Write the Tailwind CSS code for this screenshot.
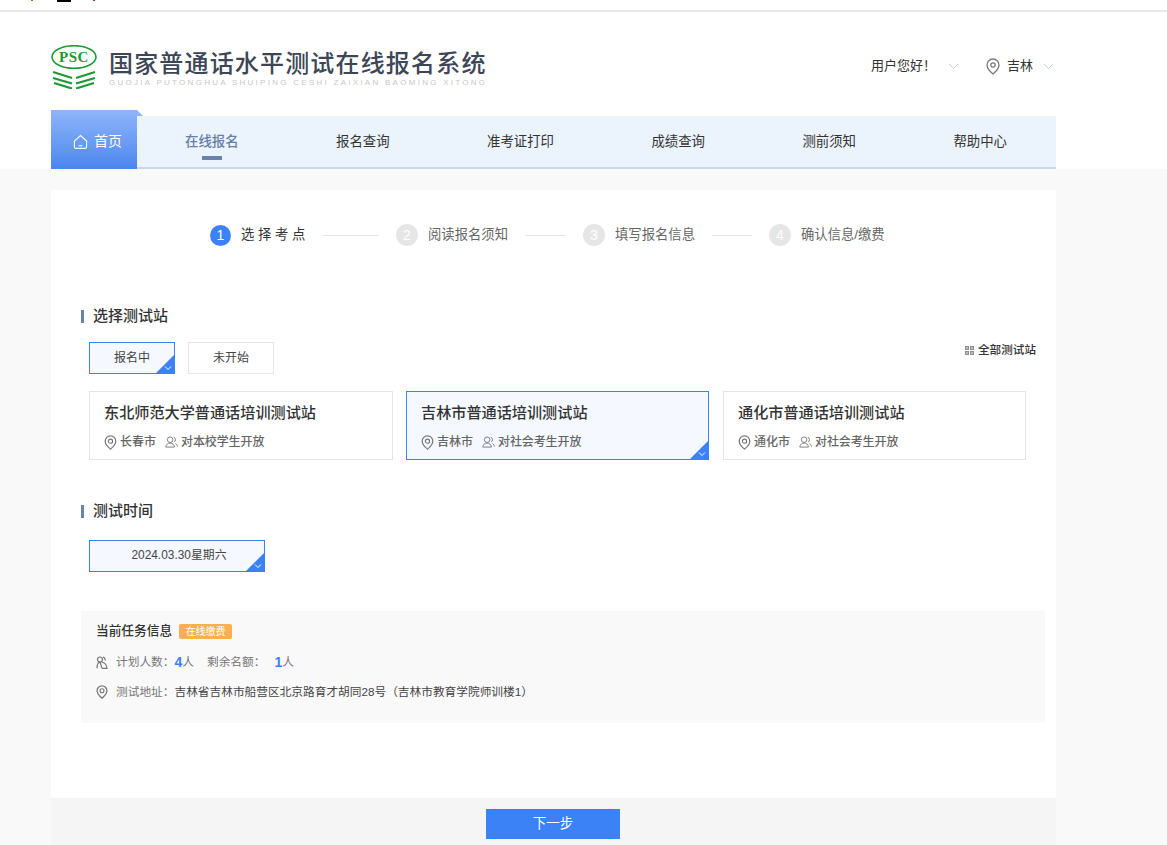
<!DOCTYPE html>
<html lang="zh-CN">
<head>
<meta charset="utf-8">
<title>国家普通话水平测试在线报名系统</title>
<script src="https://cdn.jsdelivr.net/npm/@tailwindcss/browser@4"></script>
</head>
<body class="bg-[#f9f9f9] font-['Liberation_Sans','Noto_Sans_CJK_SC',sans-serif] text-[#333]">
<div class="h-[845px] overflow-hidden flex flex-col">
  <!-- top sliver -->
  <div class="bg-white h-[12px] shrink-0 border-b-2 border-[#e8e8e8] flex items-start">
    <span class="ml-[31px] w-[2px] h-[1px] bg-[#a86a2a]"></span>
    <span class="ml-[24px] w-[14px] h-[2px] bg-black"></span>
    <span class="ml-[22px] w-[2px] h-[1px] bg-[#8a2a5a]"></span>
  </div>

  <!-- header -->
  <header class="bg-white h-[157px] shrink-0">
    <div class="w-[1005px] ml-[51px]">
      <div class="h-[98px] flex items-start">
        <div class="mt-[33px] flex items-start">
          <svg width="46" height="44" viewBox="0 0 46 44" class="shrink-0">
            <ellipse cx="23" cy="12" rx="22" ry="11.300" fill="none" stroke="#1a9a35" stroke-width="1.600"/>
            <text x="23" y="17.300" text-anchor="middle" font-family="Liberation Serif" font-weight="700" font-size="15" letter-spacing="0.500" fill="#1a9a35">PSC</text>
            <g fill="none" stroke="#1a9a35" stroke-width="2.200">
              <path d="M2 27 L21 33 M2 33 L21 38.500 M3 38 L21 43.500"/>
              <path d="M44 27 L25 33 M44 33 L25 38.500 M43 38 L25 43.500"/>
            </g>
          </svg>
          <div class="ml-[12px] mt-[4px]">
            <div class="text-[24px] leading-[29px] tracking-[1.170px] font-medium text-[#3d4656] whitespace-nowrap">国家普通话水平测试在线报名系统</div>
            <div class="text-[8px] leading-[9px] tracking-[2.270px] text-[#c8c8c8] whitespace-nowrap font-['Liberation_Sans',sans-serif]">GUOJIA PUTONGHUA SHUIPING CESHI ZAIXIAN BAOMING XITONG</div>
          </div>
        </div>
        <div class="ml-auto mt-[44px] mr-[2px] flex items-center h-[20px] text-[13px] text-[#333]">
          <span>用户您好！</span>
          <svg width="11" height="7" viewBox="0 0 11 7" class="ml-[12px]"><path d="M1 1l4.500 4.500L10 1" fill="none" stroke="#c5d0e0" stroke-width="1"/></svg>
          <svg width="14" height="17" viewBox="0 0 14 17" class="ml-[27px]"><path d="M7 1a6 6 0 0 0-6 6c0 4 6 9 6 9s6-5 6-9a6 6 0 0 0-6-6z" fill="none" stroke="#777" stroke-width="1.300"/><circle cx="7" cy="7" r="2.200" fill="none" stroke="#777" stroke-width="1.200"/></svg>
          <span class="ml-[7px]">吉林</span>
          <svg width="11" height="7" viewBox="0 0 11 7" class="ml-[10px]"><path d="M1 1l4.500 4.500L10 1" fill="none" stroke="#c5d0e0" stroke-width="1"/></svg>
        </div>
      </div>
      <nav class="h-[59px] flex items-end relative">
        <a class="relative w-[86px] h-[59px] shrink-0 bg-gradient-to-b from-[#8fb5fb] to-[#4a86ee] text-white flex items-center pl-[22px] pt-[4px] gap-[6px] text-[14px]">
          <svg width="15" height="16" viewBox="0 0 16 16"><path d="M1.500 7 8 1.200 14.500 7v6.300a1.500 1.500 0 0 1-1.500 1.500H3a1.500 1.500 0 0 1-1.500-1.500z" fill="none" stroke="#fff" stroke-width="1.200"/><path d="M6 12h4" stroke="#fff" stroke-width="1.200"/></svg>
          <span>首页</span>
          <span class="absolute left-full top-0 w-[6px] h-[6px] bg-[#8fb5fb] [clip-path:polygon(0_0,100%_100%,0_100%)]"></span>
        </a>
        <div class="flex-1 h-[53px] bg-[#ebf3fc] border-b-2 border-[#c9d8e8] flex justify-between pl-[48px] pr-[49px] text-[13.400px] leading-[51px] text-[#333] whitespace-nowrap">
          <a class="relative text-[#667fa6] font-medium">在线报名<span class="absolute left-[17px] bottom-[7px] w-[20px] h-[4px] bg-[#6b82aa]"></span></a>
          <a>报名查询</a>
          <a>准考证打印</a>
          <a>成绩查询</a>
          <a>测前须知</a>
          <a>帮助中心</a>
        </div>
      </nav>
    </div>
  </header>

  <!-- main -->
  <main class="w-[1005px] ml-[51px] mt-[21px] flex-1 flex flex-col min-h-0">
    <div class="h-[608px] shrink-0 bg-white px-[30px]">
      <!-- steps -->
      <div class="h-[90px] pl-[129px] flex items-center text-[13.330px] text-[#666] whitespace-nowrap">
        <span class="w-[21px] h-[21px] rounded-full bg-[#3b82f6] text-white text-[14px] flex items-center justify-center">1</span>
        <span class="ml-[10px] w-[66px] tracking-[3.700px] text-[#333]">选择考点</span>
        <span class="ml-[16px] w-[56px] h-px bg-[#e3e3e3]"></span>
        <span class="ml-[17px] w-[22px] h-[22px] rounded-full bg-[#e6e6e6] text-white text-[14px] flex items-center justify-center">2</span>
        <span class="ml-[10px] w-[80px]">阅读报名须知</span>
        <span class="ml-[17px] w-[41px] h-px bg-[#e3e3e3]"></span>
        <span class="ml-[17px] w-[22px] h-[22px] rounded-full bg-[#e6e6e6] text-white text-[14px] flex items-center justify-center">3</span>
        <span class="ml-[10px] w-[80px]">填写报名信息</span>
        <span class="ml-[17px] w-[40px] h-px bg-[#e3e3e3]"></span>
        <span class="ml-[17px] w-[22px] h-[22px] rounded-full bg-[#e6e6e6] text-white text-[14px] flex items-center justify-center">4</span>
        <span class="ml-[10px]">确认信息/缴费</span>
      </div>

      <!-- 选择测试站 -->
      <div class="mt-[28px] h-[16px] flex items-center">
        <span class="w-[3px] h-[13px] bg-[#6b82aa]"></span>
        <h2 class="ml-[9px] text-[15px] font-medium text-[#333]">选择测试站</h2>
      </div>
      <div class="mt-[18px] pl-[8px] h-[32px] flex items-start">
        <button class="relative w-[86px] h-[32px] border border-[#3b82f6] bg-[#f5f8ff] text-[12px] text-[#444] overflow-hidden">报名中
          <span class="absolute right-0 bottom-0 w-[18px] h-[18px] bg-[#3b82f6] [clip-path:polygon(100%_0,100%_100%,0_100%)]"></span>
          <svg width="8" height="6" viewBox="0 0 8 6" class="absolute right-[2px] bottom-[2px]"><path d="M1 1.500l3 3 3-3" fill="none" stroke="#fff" stroke-width="1"/></svg>
        </button>
        <button class="ml-[13px] w-[86px] h-[32px] border border-[#e5e5e5] bg-white text-[12px] text-[#444]">未开始</button>
        <div class="ml-auto mr-[-10px] mt-[-1px] h-[18px] flex items-center">
          <svg width="9" height="9" viewBox="0 0 9 9" fill="#8f8f8f"><path d="M0 0h4v4H0zM5 0h4v4H5zM0 5h4v4H0zM5 5h4v4H5z"/><path d="M1 1h2v2H1zM6 1h2v2H6zM1 6h2v2H1zM6 6h2v2H6z" fill="#bbbbbb"/></svg>
          <span class="ml-[4px] text-[11.600px] font-medium text-[#333]">全部测试站</span>
        </div>
      </div>
      <div class="mt-[17px] pl-[8px] flex items-start">
        <!-- card 1 -->
        <div class="relative w-[304px] h-[69px] border border-[#e5e5e5] bg-white pl-[14px]">
          <div class="mt-[11px] text-[15.150px] leading-[20px] font-medium text-[#333]">东北师范大学普通话培训测试站</div>
          <div class="mt-[10px] flex items-center text-[12px] leading-[18px] font-medium text-[#666]">
            <svg width="13" height="15" viewBox="0 0 14 17"><path d="M7 1a6 6 0 0 0-6 6c0 4 6 9 6 9s6-5 6-9a6 6 0 0 0-6-6z" fill="none" stroke="#777" stroke-width="1.400"/><circle cx="7" cy="7" r="2.400" fill="none" stroke="#777" stroke-width="1.300"/></svg>
            <span class="ml-[3px]">长春市</span>
            <svg width="13" height="12" viewBox="0 0 14 13" class="ml-[9px]"><circle cx="5.500" cy="4" r="3" fill="none" stroke="#777"/><path d="M0.800 12c.4-3 2.300-4.300 4.700-4.300s4.300 1.300 4.700 4.300zM9.500 1.300a3 3 0 0 1 .4 5.300M11.300 8c1.200.6 1.900 1.900 2.100 3.500" fill="none" stroke="#777"/></svg>
            <span class="ml-[3px] tracking-[-0.100px]">对本校学生开放</span>
          </div>
        </div>
        <!-- card 2 -->
        <div class="relative ml-[13px] w-[303px] h-[69px] border border-[#3b82f6] bg-[#f5f8ff] pl-[14px] overflow-hidden">
          <div class="mt-[11px] text-[15.150px] leading-[20px] font-medium text-[#333]">吉林市普通话培训测试站</div>
          <div class="mt-[10px] flex items-center text-[12px] leading-[18px] font-medium text-[#666]">
            <svg width="13" height="15" viewBox="0 0 14 17"><path d="M7 1a6 6 0 0 0-6 6c0 4 6 9 6 9s6-5 6-9a6 6 0 0 0-6-6z" fill="none" stroke="#777" stroke-width="1.400"/><circle cx="7" cy="7" r="2.400" fill="none" stroke="#777" stroke-width="1.300"/></svg>
            <span class="ml-[3px]">吉林市</span>
            <svg width="13" height="12" viewBox="0 0 14 13" class="ml-[9px]"><circle cx="5.500" cy="4" r="3" fill="none" stroke="#777"/><path d="M0.800 12c.4-3 2.300-4.300 4.700-4.300s4.300 1.300 4.700 4.300zM9.500 1.300a3 3 0 0 1 .4 5.300M11.300 8c1.200.6 1.900 1.900 2.100 3.500" fill="none" stroke="#777"/></svg>
            <span class="ml-[3px] tracking-[-0.100px]">对社会考生开放</span>
          </div>
          <span class="absolute right-0 bottom-0 w-[18px] h-[18px] bg-[#3b82f6] [clip-path:polygon(100%_0,100%_100%,0_100%)]"></span>
          <svg width="8" height="6" viewBox="0 0 8 6" class="absolute right-[2px] bottom-[2px]"><path d="M1 1.500l3 3 3-3" fill="none" stroke="#fff" stroke-width="1"/></svg>
        </div>
        <!-- card 3 -->
        <div class="relative ml-[14px] w-[303px] h-[69px] border border-[#e5e5e5] bg-white pl-[14px]">
          <div class="mt-[11px] text-[15.150px] leading-[20px] font-medium text-[#333]">通化市普通话培训测试站</div>
          <div class="mt-[10px] flex items-center text-[12px] leading-[18px] font-medium text-[#666]">
            <svg width="13" height="15" viewBox="0 0 14 17"><path d="M7 1a6 6 0 0 0-6 6c0 4 6 9 6 9s6-5 6-9a6 6 0 0 0-6-6z" fill="none" stroke="#777" stroke-width="1.400"/><circle cx="7" cy="7" r="2.400" fill="none" stroke="#777" stroke-width="1.300"/></svg>
            <span class="ml-[3px]">通化市</span>
            <svg width="13" height="12" viewBox="0 0 14 13" class="ml-[9px]"><circle cx="5.500" cy="4" r="3" fill="none" stroke="#777"/><path d="M0.800 12c.4-3 2.300-4.300 4.700-4.300s4.300 1.300 4.700 4.300zM9.500 1.300a3 3 0 0 1 .4 5.300M11.300 8c1.200.6 1.900 1.900 2.100 3.500" fill="none" stroke="#777"/></svg>
            <span class="ml-[3px] tracking-[-0.100px]">对社会考生开放</span>
          </div>
        </div>
      </div>

      <!-- 测试时间 -->
      <div class="mt-[43px] h-[16px] flex items-center">
        <span class="w-[3px] h-[13px] bg-[#6b82aa]"></span>
        <h2 class="ml-[9px] text-[15px] font-medium text-[#333]">测试时间</h2>
      </div>
      <div class="mt-[21px] pl-[8px]">
        <button class="relative w-[176px] h-[32px] border border-[#3b82f6] bg-[#f5f8ff] pl-[4px] text-[11.900px] text-[#444] overflow-hidden">2024.03.30星期六
          <span class="absolute right-0 bottom-0 w-[18px] h-[18px] bg-[#3b82f6] [clip-path:polygon(100%_0,100%_100%,0_100%)]"></span>
          <svg width="8" height="6" viewBox="0 0 8 6" class="absolute right-[2px] bottom-[2px]"><path d="M1 1.500l3 3 3-3" fill="none" stroke="#fff" stroke-width="1"/></svg>
        </button>
      </div>

      <!-- info -->
      <div class="mt-[39px] w-[964px] h-[112px] bg-[#f9f9f9] pl-[15px] pt-[13px]">
        <div class="h-[15px] flex items-center">
          <span class="text-[12.700px] font-medium text-[#333]">当前任务信息</span>
          <span class="ml-[7px] w-[53px] h-[15px] rounded-[2px] bg-[#fbb04f] text-white text-[10px] leading-[15px] text-center">在线缴费</span>
        </div>
        <div class="mt-[14px] h-[18px] flex items-center text-[11.700px] text-[#777] whitespace-nowrap">
          <svg width="12" height="13" viewBox="0 0 12 13" fill="none" stroke="#777" stroke-width="1.200"><circle cx="4" cy="3.500" r="2.500"/><path d="M7 1.200a2.500 2.500 0 0 1 2 3.300"/><path d="M1 12.300c0-3.500 1.300-6 3-6.500l2 6.500M6 6.300c2.500 0 4.500 2.500 5 6H6"/></svg>
          <span class="ml-[8px]">计划人数：</span>
          <span class="text-[#3b82f6] text-[14px] font-bold">4</span>
          <span>人</span>
          <span class="ml-[13px]">剩余名额：</span>
          <span class="ml-[9px] text-[#3b82f6] text-[14px] font-bold">1</span>
          <span>人</span>
        </div>
        <div class="mt-[12px] h-[18px] flex items-center text-[11.700px] whitespace-nowrap">
          <svg width="12" height="14" viewBox="0 0 14 17"><path d="M7 1a6 6 0 0 0-6 6c0 4 6 9 6 9s6-5 6-9a6 6 0 0 0-6-6z" fill="none" stroke="#777" stroke-width="1.500"/><circle cx="7" cy="7" r="2.400" fill="none" stroke="#777" stroke-width="1.400"/></svg>
          <span class="ml-[8px] text-[#777]">测试地址：</span>
          <span class="text-[#444]">吉林省吉林市船营区北京路育才胡同28号（吉林市教育学院师训楼1）</span>
        </div>
      </div>
    </div>

    <!-- footer -->
    <div class="flex-1 bg-[#f5f5f5] pt-[11px] pr-[1px] flex justify-center">
      <button class="w-[134px] h-[30px] bg-[#3b82f6] text-white text-[13.500px]">下一步</button>
    </div>
  </main>
</div>
</body>
</html>
